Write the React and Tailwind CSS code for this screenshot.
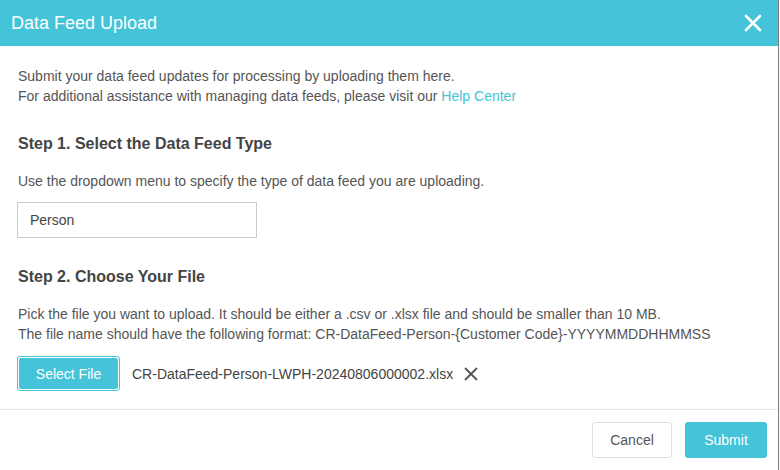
export default function App() {
  return (
    <div className="w-[780px] h-[470px] bg-white" style={{ fontFamily: '"Liberation Sans", Arial, sans-serif' }}>
      <div className="w-[779px] h-[470px] border-r border-[#7a7a7a] flex flex-col">
        {/* header */}
        <div className="h-[46px] bg-[#45c3d8] flex items-center justify-between pl-[11px] pr-[16px]">
          <h2 className="text-white text-[18px]">Data Feed Upload</h2>
          <svg className="w-[18px] h-[18px]" viewBox="0 0 18 18" fill="none" stroke="white" strokeWidth="2.6" strokeLinecap="round">
            <path d="M2 2l14 14M16 2L2 16" />
          </svg>
        </div>

        {/* body */}
        <div className="flex-1 px-[18px] pt-[20px] text-[14px] text-[#555] leading-[20px]">
          <p>Submit your data feed updates for processing by uploading them here.</p>
          <p>
            For additional assistance with managing data feeds, please visit our{" "}
            <a className="text-[#45c3d8]">Help Center</a>
          </p>

          <h3 className="mt-[26px] text-[16px] font-bold text-[#444] leading-[24px]">Step 1. Select the Data Feed Type</h3>
          <p className="mt-[15px]">Use the dropdown menu to specify the type of data feed you are uploading.</p>
          <div className="mt-[11px] -ml-px w-[240px] h-[36px] border border-[#cccccc] flex items-center px-[12px] text-[#444]">
            Person
          </div>

          <h3 className="mt-[27px] text-[16px] font-bold text-[#444] leading-[24px]">Step 2. Choose Your File</h3>
          <p className="mt-[15px]">Pick the file you want to upload. It should be either a .csv or .xlsx file and should be smaller than 10 MB.</p>
          <p>The file name should have the following format: CR-DataFeed-Person-{"{Customer Code}"}-YYYYMMDDHHMMSS</p>

          <div className="mt-[12px] -ml-px flex items-center">
            <button className="w-[103px] h-[35px] rounded-[3px] border border-[#45c3d8] p-[1px] bg-white">
              <span className="w-full h-full rounded-[2px] bg-[#45c3d8] text-white flex items-center justify-center">Select File</span>
            </button>
            <span className="ml-[12px] text-[#444]">CR-DataFeed-Person-LWPH-20240806000002.xlsx</span>
            <svg className="ml-[11px] w-[14px] h-[14px]" viewBox="0 0 14 14" fill="none" stroke="#555" strokeWidth="1.8">
              <path d="M1 1l12 12M13 1L1 13" />
            </svg>
          </div>
        </div>

        {/* footer */}
        <div className="h-[61px] border-t border-[#e5e5e5] flex items-start justify-end gap-[13px] pt-[12px] pr-[11px]">
          <button className="w-[80px] h-[36px] border border-[#dddddd] rounded-[3px] text-[14px] text-[#555] bg-white">Cancel</button>
          <button className="w-[82px] h-[36px] rounded-[3px] text-[14px] text-white bg-[#45c3d8]">Submit</button>
        </div>
      </div>
    </div>
  );
}
